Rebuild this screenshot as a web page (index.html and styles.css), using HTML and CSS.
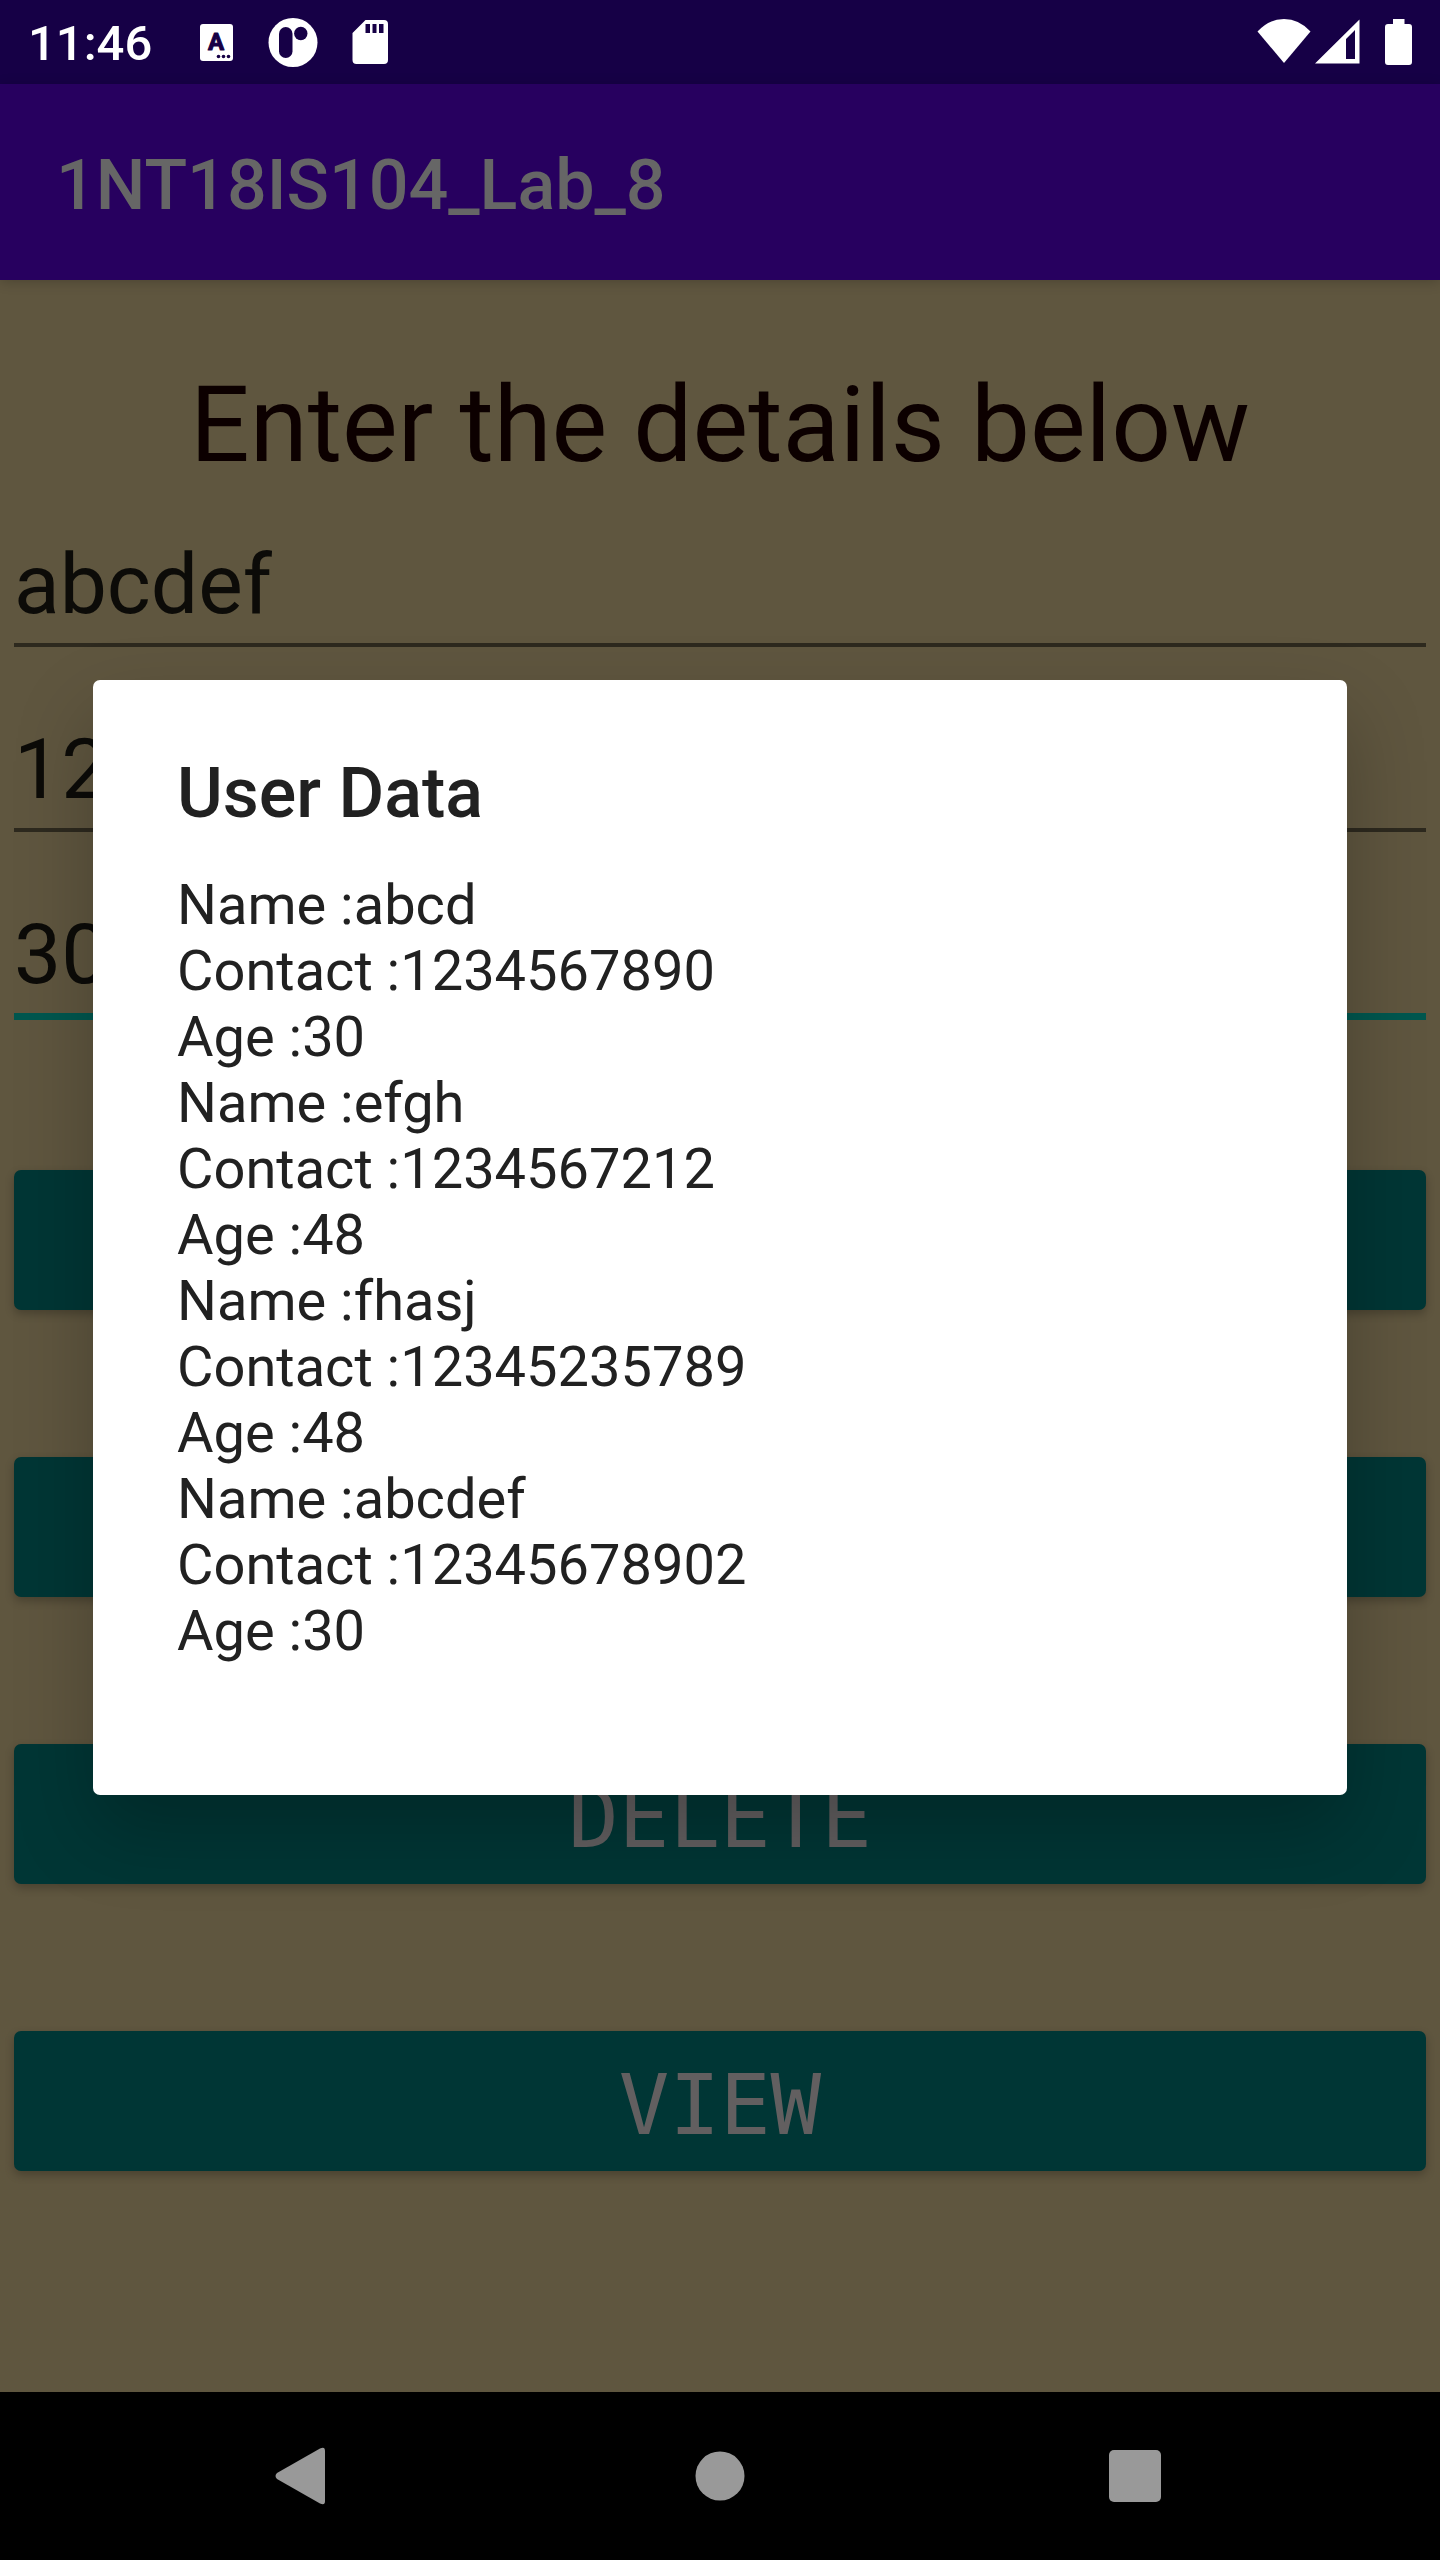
FILE: index.html
```html
<!DOCTYPE html>
<html lang="en">
<head>
<meta charset="utf-8">
<meta name="viewport" content="width=device-width, initial-scale=1">
<title>1NT18IS104_Lab_8</title>
<link rel="stylesheet" href="styles.css">
</head>
<body>
<div class="screen">
  <div class="status-bar">
    <span class="clock">11:46</span>
    <div class="notifications">
      <svg width="34" height="46" viewBox="0 0 34 46" aria-hidden="true">
        <rect x="0" y="5" width="33" height="37" rx="3" fill="#fff"/>
        <text class="glyph" x="16" y="31" text-anchor="middle">A</text>
        <g fill="#160046"><circle cx="18.500" cy="37.500" r="1.800"/><circle cx="23.500" cy="37.500" r="1.800"/><circle cx="28.500" cy="37.500" r="1.800"/></g>
      </svg>
      <svg width="50" height="50" viewBox="0 0 50 50" aria-hidden="true">
        <circle cx="25" cy="25.500" r="24.500" fill="#fff"/>
        <rect x="11" y="10" width="13.500" height="31" rx="6.750" fill="#160046"/>
        <circle cx="32.800" cy="16.500" r="6.700" fill="#160046"/>
      </svg>
      <svg width="36" height="46" viewBox="0 0 36 46" aria-hidden="true">
        <path fill="#fff" fill-rule="evenodd" d="M13.500 1H32a4 4 0 0 1 4 4V41a4 4 0 0 1-4 4H4.500a4 4 0 0 1-4-4V14Zm0 4v9h4.500V5Zm7 0v9h4V5Zm6.500 0v9h4.500V5Z"/>
      </svg>
    </div>
    <div class="system-icons">
      <svg width="54" height="46" viewBox="0 0 54 46" aria-hidden="true"><path fill="#fff" d="M27 44 0.500 12.500Q12 0 27 0T53.500 12.500Z"/></svg>
      <svg width="46" height="46" viewBox="0 0 46 46" aria-hidden="true"><path fill="#fff" fill-rule="evenodd" d="M44.500 0.500V44.500H0Zm-4.500 10.500L31 20V40H40Z"/></svg>
      <svg class="battery" width="27" height="46" viewBox="0 0 27 46" aria-hidden="true"><path fill="#fff" d="M8 0H19.500V5H24a3 3 0 0 1 3 3V43a3 3 0 0 1-3 3H3a3 3 0 0 1-3-3V8a3 3 0 0 1 3-3H8Z"/></svg>
    </div>
  </div>

  <header class="app-bar"><h1 class="app-title">1NT18IS104_Lab_8</h1></header>

  <main class="content">
    <h2 class="heading">Enter the details below</h2>
    <form class="form">
      <div class="fields">
        <input class="field" type="text" aria-label="Name" value="abcdef">
        <input class="field" type="text" aria-label="Contact" value="12345678902">
        <input class="field field-active" type="text" aria-label="Age" value="30">
      </div>
      <div class="actions">
        <button class="action" type="button">INSERT</button>
        <button class="action" type="button">UPDATE</button>
        <button class="action" type="button">DELETE</button>
        <button class="action" type="button">VIEW</button>
      </div>
    </form>
  </main>

  <nav class="nav-bar">
    <button class="nav-button" type="button" aria-label="Back">
      <svg width="60" height="60" viewBox="0 0 60 60"><path fill="#999" d="M2 27 45 2.500Q50 0 50 5V55Q50 60 45 57.500L2 33Q-1 30 2 27Z"/></svg>
    </button>
    <button class="nav-button" type="button" aria-label="Home">
      <svg width="60" height="60" viewBox="0 0 60 60"><circle cx="30" cy="30" r="24.500" fill="#999"/></svg>
    </button>
    <button class="nav-button" type="button" aria-label="Recent apps">
      <svg width="60" height="60" viewBox="0 0 60 60"><rect x="4" y="4" width="52" height="52" rx="5" fill="#999"/></svg>
    </button>
  </nav>

  <div class="overlay">
    <section class="dialog" role="dialog" aria-labelledby="dialog-title">
      <h2 class="dialog-title" id="dialog-title">User Data</h2>
      <p class="dialog-message">Name :abcd<br>Contact :1234567890<br>Age :30<br>Name :efgh<br>Contact :1234567212<br>Age :48<br>Name :fhasj<br>Contact :12345235789<br>Age :48<br>Name :abcdef<br>Contact :12345678902<br>Age :30</p>
    </section>
  </div>
</div>
</body>
</html>
```
FILE: styles.css
```css
* {
  box-sizing: border-box;
}

body {
  margin: 0;
  font-family: Roboto, "Liberation Sans", sans-serif;
  background: #5f563f;
}

h1, h2, p {
  margin: 0;
}

button {
  border: 0;
  padding: 0;
}

svg {
  display: block;
}

.screen {
  position: relative;
  display: flex;
  flex-direction: column;
  min-height: 100vh;
}

/* Status bar */
.status-bar {
  display: flex;
  align-items: center;
  height: 84px;
  padding: 0 28px;
  background: #160046;
  color: #fff;
}

.clock {
  padding-top: 4px;
  font-size: 49px;
  line-height: 58px;
  font-weight: 500;
}

.notifications {
  display: flex;
  align-items: center;
  gap: 34px;
  margin-left: 48px;
}

.glyph {
  font-size: 24px;
  font-weight: 700;
  fill: #160046;
  stroke: #160046;
  stroke-linejoin: round;
}

.system-icons {
  display: flex;
  gap: 4px;
  margin-left: auto;
}

.battery {
  margin-left: 20px;
}

/* App bar */
.app-bar {
  display: flex;
  align-items: center;
  height: 196px;
  padding: 6px 56px 0;
  background: #27005f;
  box-shadow: 0 2px 12px rgba(0, 0, 0, 0.2);
}

.app-title {
  color: #666;
  font-size: 70px;
  line-height: 82px;
  font-weight: 500;
}

/* Form */
.content {
  flex: 1;
  padding: 84px 14px;
}

.heading {
  margin-bottom: 48px;
  color: #0c0000;
  font-size: 105px;
  line-height: 123px;
  font-weight: 400;
  text-align: center;
}

.fields {
  display: flex;
  flex-direction: column;
  gap: 73px;
  margin-bottom: 150px;
}

.field {
  width: 100%;
  height: 112px;
  padding: 0 0 10px;
  border: 0;
  border-bottom: 4px solid #2d291e;
  border-radius: 0;
  outline: 0;
  background: transparent;
  color: #0c0b08;
  font-family: inherit;
  font-size: 84px;
  line-height: 98px;
}

.field-active {
  height: 115px;
  border-bottom: 7px solid #01574f;
}

.actions {
  display: flex;
  flex-direction: column;
  gap: 147px;
}

.action {
  height: 140px;
  padding-top: 8px;
  border-radius: 7px;
  background: #003635;
  box-shadow: 0 4px 10px rgba(0, 0, 0, 0.24);
  color: #625f60;
  font-family: "DejaVu Sans Mono", monospace;
  font-size: 84px;
  line-height: 98px;
}

/* Navigation bar */
.nav-bar {
  display: flex;
  justify-content: center;
  align-items: center;
  gap: 355px;
  height: 168px;
  background: #000;
}

.nav-button {
  background: transparent;
}

/* Dialog */
.overlay {
  position: absolute;
  inset: 84px 0 170px;
  display: flex;
  align-items: center;
  padding: 0 93px;
}

.dialog {
  flex: 1;
  padding: 72px 84px 131px;
  border-radius: 7px;
  background: #fff;
  box-shadow: 0 36px 80px rgba(0, 0, 0, 0.24);
  color: #212121;
}

.dialog-title {
  margin-bottom: 38px;
  font-size: 70px;
  line-height: 82px;
  font-weight: 500;
}

.dialog-message {
  font-size: 56px;
  line-height: 66px;
}
```
